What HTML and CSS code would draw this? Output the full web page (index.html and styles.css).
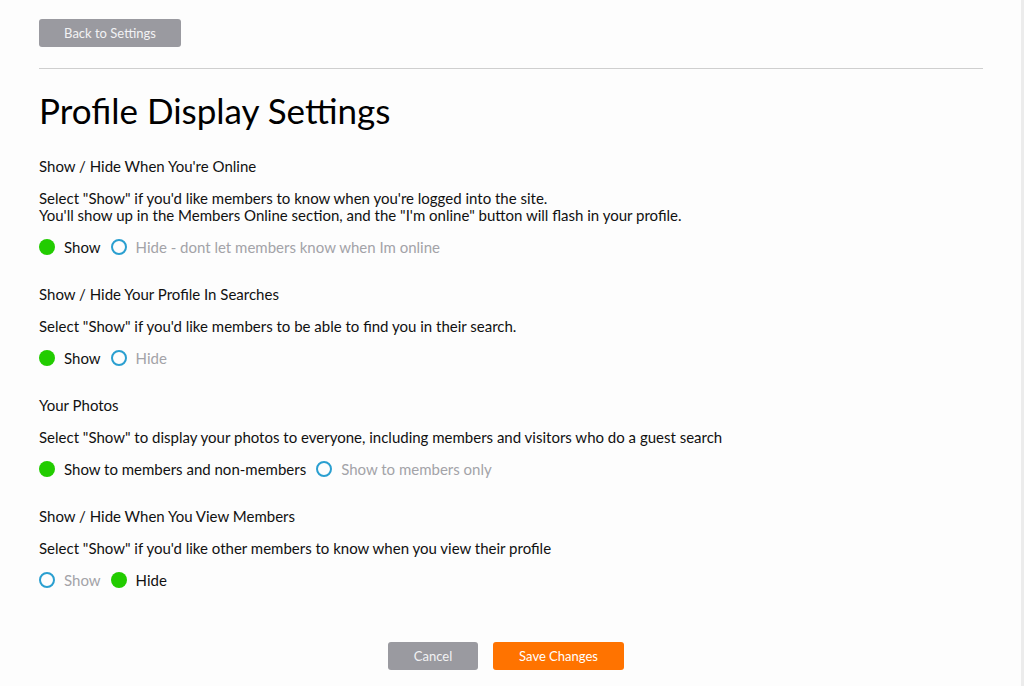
FILE: index.html
```html
<!DOCTYPE html>
<html>
<head>
<meta charset="utf-8">
<link rel="stylesheet" href="styles.css">
</head>
<body>
<div class="page">
  <div class="top">
    <button class="btn btn-grey btn-back">Back to Settings</button>
  </div>
  <hr class="rule">
  <h1 class="title">Profile Display Settings</h1>

  <section class="group">
    <h2 class="group-title">Show / Hide When You're Online</h2>
    <p class="desc">Select "Show" if you'd like members to know when you're logged into the site.<br>You'll show up in the Members Online section, and the "I'm online" button will flash in your profile.</p>
    <div class="options">
      <span class="opt on"><span class="dot"></span>Show</span>
      <span class="opt"><span class="dot"></span>Hide - dont let members know when Im online</span>
    </div>
  </section>

  <section class="group">
    <h2 class="group-title">Show / Hide Your Profile In Searches</h2>
    <p class="desc">Select "Show" if you'd like members to be able to find you in their search.</p>
    <div class="options">
      <span class="opt on"><span class="dot"></span>Show</span>
      <span class="opt"><span class="dot"></span>Hide</span>
    </div>
  </section>

  <section class="group">
    <h2 class="group-title">Your Photos</h2>
    <p class="desc">Select "Show" to display your photos to everyone, including members and visitors who do a guest search</p>
    <div class="options">
      <span class="opt on"><span class="dot"></span>Show to members and non-members</span>
      <span class="opt"><span class="dot"></span>Show to members only</span>
    </div>
  </section>

  <section class="group">
    <h2 class="group-title">Show / Hide When You View Members</h2>
    <p class="desc">Select "Show" if you'd like other members to know when you view their profile</p>
    <div class="options">
      <span class="opt"><span class="dot"></span>Show</span>
      <span class="opt on"><span class="dot"></span>Hide</span>
    </div>
  </section>

  <div class="actions">
    <button class="btn btn-grey btn-cancel">Cancel</button>
    <button class="btn btn-orange btn-save">Save Changes</button>
  </div>
</div>
</body>
</html>
```

FILE: styles.css
```css
html, body {
  margin: 0;
  padding: 0;
  height: 100%;
}
body {
  background: #fdfdfd;
  font-family: "Lato", "Open Sans", sans-serif;
  color: #111;
  border-right: 3px solid #ececec;
  box-sizing: border-box;
}
.page {
  padding: 19px 0 0 39px;
  width: 944px;
}
.btn {
  font-family: inherit;
  font-size: 13px;
  height: 28px;
  border: none;
  border-radius: 3px;
  color: #fff;
  padding: 0;
  cursor: pointer;
}
.btn-grey { background: #9a9aa0; color: #f2f2f4; }
.btn-orange { background: #ff7300; }
.btn-back { width: 142px; }
.btn-cancel { width: 90px; }
.btn-save { width: 131px; }
.rule {
  margin: 21px 0 0 0;
  border: none;
  border-top: 1px solid #cfcfcf;
  height: 0;
}
.title {
  font-weight: 400;
  font-size: 35px;
  margin: 21px 0 0 0;
  line-height: 40px;
  color: #000;
}
.group { margin-top: 26px; }
.group + .group { margin-top: 27px; }
.group-title {
  font-size: 15px;
  font-weight: 400;
  margin: 0;
  line-height: 20px;
}
.desc {
  font-size: 15px;
  margin: 14px 0 0 0;
  line-height: 17px;
}
.options {
  display: flex;
  align-items: center;
  gap: 10px;
  margin-top: 13px;
  font-size: 15px;
  line-height: 20px;
}
.opt {
  display: flex;
  align-items: center;
  gap: 9px;
  color: #a3a3a8;
}
.opt.on { color: #111; }
.dot {
  width: 16px;
  height: 16px;
  border-radius: 50%;
  box-sizing: border-box;
  border: 2px solid #2a9fd0;
  background: transparent;
}
.opt.on .dot {
  border: none;
  background: #22cc00;
}
.actions {
  display: flex;
  justify-content: center;
  gap: 15px;
  margin-top: 52px;
  padding-right: 10px;
}
```
